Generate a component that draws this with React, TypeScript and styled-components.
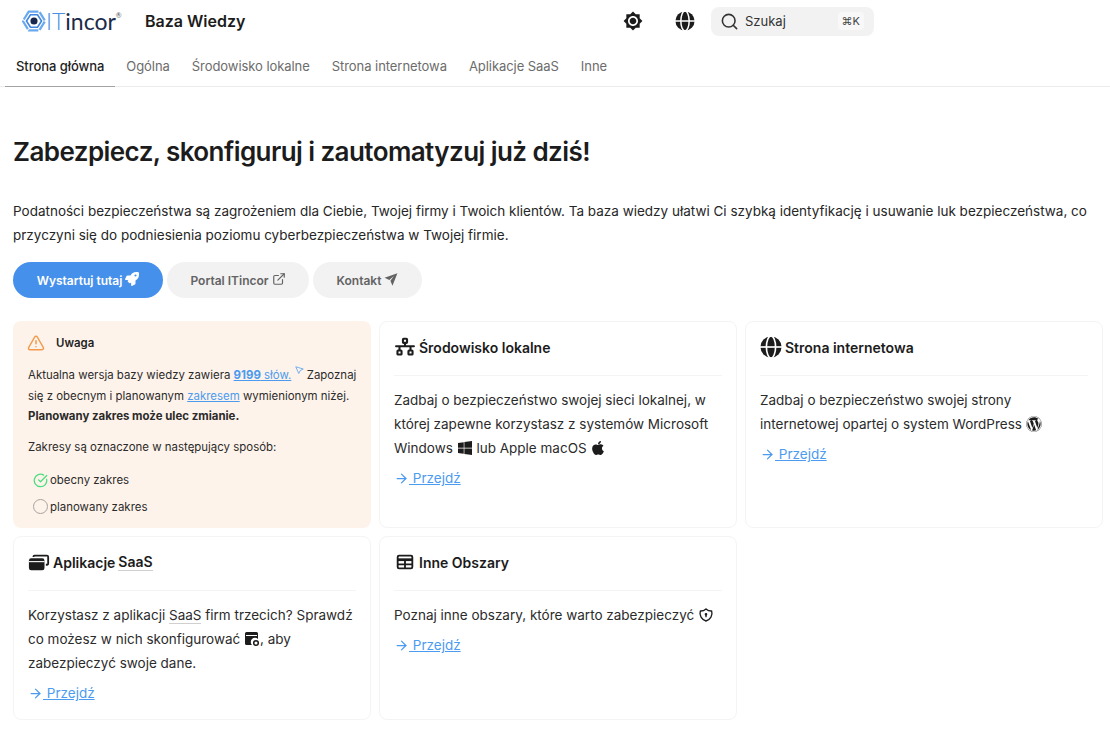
import React from 'react';
import styled, { createGlobalStyle } from 'styled-components';
import { FaApple, FaRocket, FaWindows, FaWordpress } from 'react-icons/fa';
import { MdBrightness7 } from 'react-icons/md';
import { PiNetworkBold } from 'react-icons/pi';
import { LuArrowRight, LuCircleCheckBig, LuExternalLink, LuSearch, LuTriangleAlert } from 'react-icons/lu';
import { TbShieldLock } from 'react-icons/tb';

const GlobalStyle = createGlobalStyle`
  html, body {
    margin: 0;
    padding: 0;
    background: #fff;
    color: #1f1f1f;
    font-family: Inter, "Noto Sans", sans-serif;
  }
  * { box-sizing: border-box; }
`;

const Header = styled.header`
  display: flex;
  align-items: center;
  height: 42px;
  padding: 0 236px 0 22px;
`;

const Logo = styled.div`
  display: flex;
  align-items: center;
  width: 100px;
  height: 30px;
`;

const LogoText = styled.span`
  font-family: Lato, sans-serif;
  font-size: 23px;
  color: #1d2b4a;
  line-height: 1;
  b { font-weight: 300; color: #4a90e2; }
  sup { font-size: 7px; color: #555; vertical-align: 12px; line-height: 0; }
`;

const SiteTitle = styled.div`
  margin-left: 23px;
  font-size: 16px;
  font-weight: 600;
  color: #1c1c1c;
`;

const Actions = styled.div`
  margin-left: auto;
  display: flex;
  align-items: center;
`;

const IconButton = styled.button`
  display: flex;
  align-items: center;
  justify-content: center;
  width: 20px;
  height: 20px;
  padding: 0;
  margin-right: ${(p: { $gap: number }) => p.$gap}px;
  border: 0;
  background: none;
  color: #1c1c1c;
  font-size: 20px;
`;

const SearchBox = styled.div`
  display: flex;
  align-items: center;
  width: 163px;
  height: 29px;
  padding: 0 10px 0 9px;
  border-radius: 8px;
  background: #f2f2f2;
  font-size: 13px;
  color: #333;
  svg { font-size: 19px; margin-right: 6px; }
`;

const Kbd = styled.span`
  margin-left: auto;
  padding: 2px 4px;
  border-radius: 4px;
  background: #f8f8f8;
  font-size: 11px;
  color: #444;
`;

const Tabs = styled.nav`
  display: flex;
  height: 45px;
  padding-left: 5px;
  border-bottom: 1px solid #ececec;
`;

const Tab = styled.a<{ $active?: boolean }>`
  display: flex;
  align-items: center;
  height: 45px;
  padding: 4px 11px 0;
  font-size: 13px;
  letter-spacing: -0.06px;
  font-weight: ${(p) => (p.$active ? 500 : 400)};
  color: ${(p) => (p.$active ? '#1f1f1f' : '#6c6c6c')};
  border-bottom: 1px solid ${(p) => (p.$active ? '#a3a3a3' : 'transparent')};
`;

const Main = styled.main`
  padding: 0 7px 0 13px;
`;

const Heading = styled.h1`
  margin: 47px 0 0;
  font-size: 26px;
  line-height: 36px;
  font-weight: 600;
  letter-spacing: -0.57px;
  color: #1c1c1c;
`;

const Lead = styled.p`
  margin: 29px 0 0;
  font-size: 13.5px;
  line-height: 24px;
  color: #262626;
`;

const ButtonRow = styled.div`
  display: flex;
  gap: 4px;
  margin-top: 15px;
`;

const PillButton = styled.a<{ $primary?: boolean; $width: number }>`
  display: flex;
  align-items: center;
  justify-content: center;
  gap: 3px;
  width: ${(p) => p.$width}px;
  height: 36px;
  border-radius: 18px;
  font-size: 12px;
  font-weight: 600;
  background: ${(p) => (p.$primary ? '#4590ea' : '#f2f2f2')};
  color: ${(p) => (p.$primary ? '#fff' : '#636363')};
  svg { font-size: 14px; margin-top: -3px; }
`;

const CardGrid = styled.section`
  display: grid;
  grid-template-columns: repeat(3, 358px);
  grid-template-rows: 207px 184px;
  gap: 8px;
  margin-top: 23px;
`;

const Alert = styled.div`
  padding: 11px 8px 10px 15px;
  border-radius: 8px;
  background: #fef3ea;
  font-size: 11.45px;
  line-height: 20.5px;
  color: #2b2b2b;
`;

const AlertTitle = styled.div`
  display: flex;
  align-items: center;
  gap: 11px;
  height: 22px;
  margin-bottom: 11px;
  font-weight: 600;
  color: #1f1f1f;
  svg { font-size: 18px; color: #f2994a; margin-left: -1px; }
`;

const AlertText = styled.p<{ $after: number; $width?: number }>`
  margin: 0 0 ${(p) => p.$after}px;
  max-width: ${(p) => (p.$width ? `${p.$width}px` : 'none')};
`;

const InlineLink = styled.a`
  color: #4b9bf0;
  text-decoration: underline;
`;

const LegendRow = styled.div`
  display: flex;
  align-items: center;
  gap: 2px;
  height: 26.5px;
  padding-left: 5px;
`;

const EmptyDot = styled.span`
  width: 15px;
  height: 15px;
  border: 1px solid #a8a29e;
  border-radius: 50%;
`;

const Card = styled.article`
  padding: 13px 14px 14px;
  border: 1px solid #f4f4f4;
  border-radius: 8px;
`;

const CardTitle = styled.h3`
  display: flex;
  align-items: center;
  gap: 3px;
  height: 24px;
  margin: 0 0 16px;
  font-size: 14px;
  font-weight: 600;
  color: #1c1c1c;
  svg { font-size: 22px; flex: none; }
`;

const Rule = styled.hr`
  margin: 0 0 12px;
  border: 0;
  border-top: 1px solid #f4f4f4;
`;

const CardBody = styled.p`
  margin: 0 0 6px;
  font-size: 13.5px;
  line-height: 24px;
  color: #2b2b2b;
  svg { font-size: 16px; vertical-align: -3px; color: #1c1c1c; }
`;

const GoLink = styled.a`
  display: inline-flex;
  align-items: center;
  font-size: 13.5px;
  line-height: 24px;
  color: #4b9bf0;
  text-decoration: underline;
  svg { font-size: 15px; }
`;

const Term = styled.span`
  border-bottom: 1px solid #cfcfcf;
`;

const LogoMark = () => (
  <svg width="24" height="24" viewBox="0 0 27 24" fill="none">
    <path d="M7.5 1.5h12L26 12l-6.500 10.500h-12L1 12z" stroke="#6aa9ee" strokeWidth="2.5" strokeDasharray="11 1.6" />
    <path d="M9.5 5h8L22 12l-4.500 7h-8L5 12z" stroke="#3f86dc" strokeWidth="1.8" />
    <circle cx="13.5" cy="12" r="4" fill="#16264d" />
  </svg>
);

const GlobeIcon = () => (
  <svg viewBox="0 0 24 24" width="1em" height="1em">
    <circle cx="12" cy="12" r="11.5" fill="currentColor" />
    <ellipse cx="12" cy="12" rx="5" ry="12" fill="none" stroke="#fff" strokeWidth="1.8" />
    <path d="M0 12h24" stroke="#fff" strokeWidth="1.8" />
  </svg>
);

const PlaneIcon = () => (
  <svg viewBox="0 0 24 24" width="1em" height="1em" fill="currentColor">
    <path d="M23 2 1 10l8 3.500 8-6.500-6 8 3.500 8.500z" />
  </svg>
);

const AppsIcon = () => (
  <svg viewBox="0 0 24 24" width="1em" height="1em" fill="currentColor">
    <rect x="1" y="8" width="17" height="13" rx="2.5" />
    <rect x="1" y="11" width="17" height="1.2" fill="#fff" />
    <path d="M5 6.500V6a2 2 0 0 1 2-2h13.500a2.500 2.500 0 0 1 2.500 2.500V14a2 2 0 0 1-2 2H19.500v-2H21V6H7v.5z" />
  </svg>
);

const TableIcon = () => (
  <svg viewBox="0 0 24 24" width="1em" height="1em" fill="none" stroke="currentColor" strokeWidth="2">
    <rect x="4" y="5" width="16" height="14" rx="1.5" />
    <path d="M4 9.500h16" strokeWidth="3" />
    <path d="M4 14.500h16M12 9v10" />
  </svg>
);

const WindowGearIcon = () => (
  <svg viewBox="0 0 16 16" width="1em" height="1em" fill="currentColor">
    <path d="M2.500 1h10A1.500 1.500 0 0 1 14 2.500V8a4 4 0 0 0-6 6H2.500A1.500 1.500 0 0 1 1 12.500v-10A1.500 1.500 0 0 1 2.500 1z" />
    <rect x="2" y="4" width="11" height="1" fill="#fff" />
    <circle cx="12" cy="12" r="2.3" fill="none" stroke="currentColor" strokeWidth="1.5" />
  </svg>
);

const PointerIcon = () => (
  <svg viewBox="0 0 12 12" width="9" height="9" fill="none" stroke="#4b9bf0" strokeWidth="1" style={{ verticalAlign: 4 }}>
    <path d="M1 1l10 3-4 2-2 4z" />
  </svg>
);

const Go = () => (
  <GoLink>
    <LuArrowRight />
    &nbsp;Przejdź
  </GoLink>
);

const App: React.FC = () => {
  return (
    <>
      <GlobalStyle />
      <Header>
        <Logo>
          <LogoMark />
          <LogoText>
            <b>IT</b>incor<sup>®</sup>
          </LogoText>
        </Logo>
        <SiteTitle>Baza Wiedzy</SiteTitle>
        <Actions>
          <IconButton $gap={32}>
            <MdBrightness7 />
          </IconButton>
          <IconButton $gap={16}>
            <GlobeIcon />
          </IconButton>
          <SearchBox>
            <LuSearch />
            Szukaj
            <Kbd>⌘K</Kbd>
          </SearchBox>
        </Actions>
      </Header>
      <Tabs>
        <Tab $active>Strona główna</Tab>
        <Tab>Ogólna</Tab>
        <Tab>Środowisko lokalne</Tab>
        <Tab>Strona internetowa</Tab>
        <Tab>Aplikacje SaaS</Tab>
        <Tab>Inne</Tab>
      </Tabs>
      <Main>
        <Heading>Zabezpiecz, skonfiguruj i zautomatyzuj już dziś!</Heading>
        <Lead>
          Podatności bezpieczeństwa są zagrożeniem dla Ciebie, Twojej firmy i Twoich klientów. Ta baza wiedzy ułatwi Ci
          szybką identyfikację i usuwanie luk bezpieczeństwa, co przyczyni się do podniesienia poziomu
          cyberbezpieczeństwa w Twojej firmie.
        </Lead>
        <ButtonRow>
          <PillButton $primary $width={150}>
            Wystartuj tutaj <FaRocket />
          </PillButton>
          <PillButton $width={142}>
            Portal ITincor <LuExternalLink />
          </PillButton>
          <PillButton $width={109}>
            Kontakt <PlaneIcon />
          </PillButton>
        </ButtonRow>
        <CardGrid>
          <Alert>
            <AlertTitle>
              <LuTriangleAlert />
              Uwaga
            </AlertTitle>
            <AlertText $after={10} $width={332}>
              Aktualna wersja bazy wiedzy zawiera{' '}
              <InlineLink>
                <strong>9199</strong> słów.
              </InlineLink>{' '}
              <PointerIcon /> Zapoznaj się z obecnym i planowanym <InlineLink>zakresem</InlineLink> wymienionym niżej.{' '}
              <strong>Planowany zakres może ulec zmianie.</strong>
            </AlertText>
            <AlertText $after={10}>Zakresy są oznaczone w następujący sposób:</AlertText>
            <LegendRow>
              <LuCircleCheckBig color="#4ade80" size={15} />
              obecny zakres
            </LegendRow>
            <LegendRow>
              <EmptyDot />
              planowany zakres
            </LegendRow>
          </Alert>
          <Card>
            <CardTitle>
              <PiNetworkBold />
              Środowisko lokalne
            </CardTitle>
            <Rule />
            <CardBody>
              Zadbaj o bezpieczeństwo swojej sieci lokalnej, w której zapewne korzystasz z systemów Microsoft Windows{' '}
              <FaWindows /> lub Apple macOS <FaApple />
            </CardBody>
            <Go />
          </Card>
          <Card>
            <CardTitle>
              <GlobeIcon />
              Strona internetowa
            </CardTitle>
            <Rule />
            <CardBody>
              Zadbaj o bezpieczeństwo swojej strony internetowej opartej o system WordPress <FaWordpress />
            </CardBody>
            <Go />
          </Card>
          <Card>
            <CardTitle>
              <AppsIcon />
              Aplikacje <Term>SaaS</Term>
            </CardTitle>
            <Rule />
            <CardBody>
              Korzystasz z aplikacji <Term>SaaS</Term> firm trzecich? Sprawdź co możesz w nich skonfigurować{' '}
              <WindowGearIcon />, aby zabezpieczyć swoje dane.
            </CardBody>
            <Go />
          </Card>
          <Card>
            <CardTitle>
              <TableIcon />
              Inne Obszary
            </CardTitle>
            <Rule />
            <CardBody>
              Poznaj inne obszary, które warto zabezpieczyć <TbShieldLock />
            </CardBody>
            <Go />
          </Card>
        </CardGrid>
      </Main>
    </>
  );
};

export default App;
